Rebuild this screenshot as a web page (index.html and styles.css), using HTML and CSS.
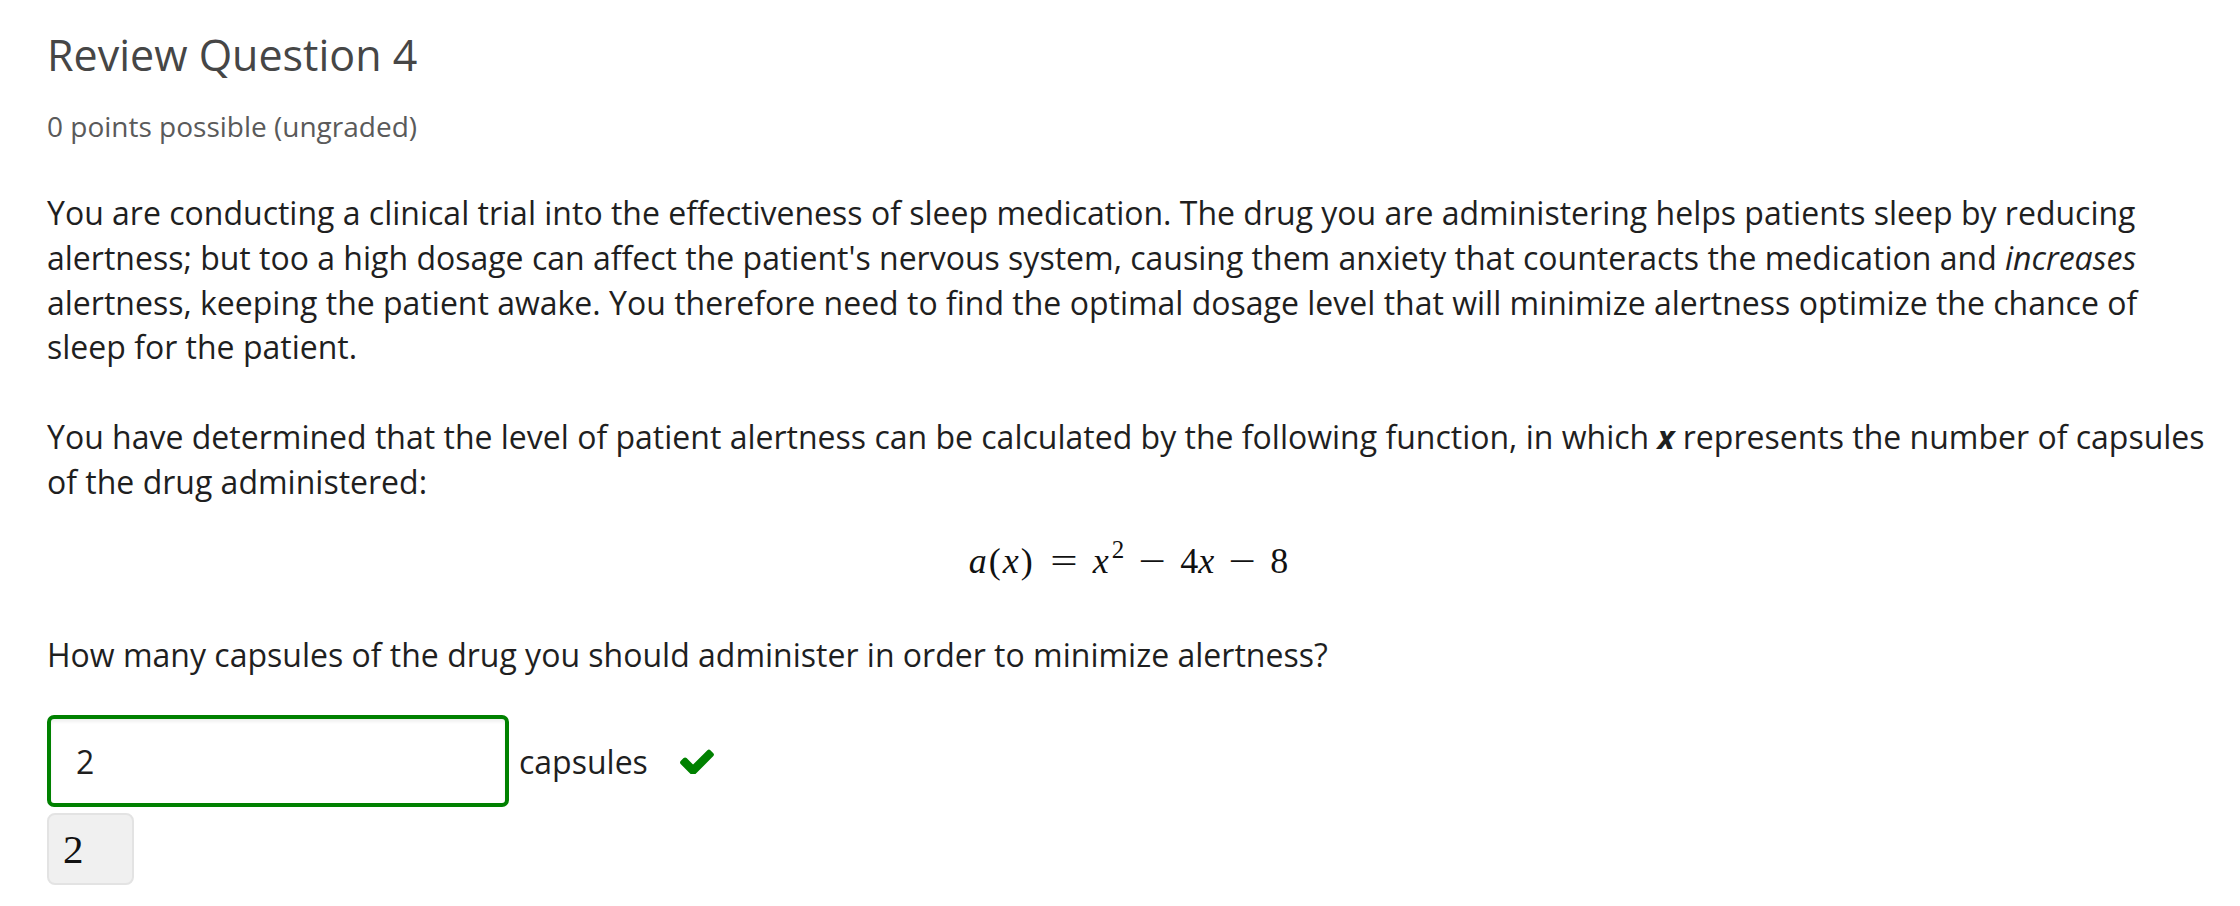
FILE: index.html
```html
<!DOCTYPE html>
<html lang="en">
<head>
<meta charset="utf-8">
<title>Review Question 4</title>
<link rel="stylesheet" href="styles.css">
</head>
<body>
<div class="problem">
  <h3 class="problem-title">Review Question 4</h3>
  <div class="problem-progress">0 points possible (ungraded)</div>
  <p class="text">You are conducting a clinical trial into the effectiveness of sleep medication. The drug you are administering helps patients sleep by reducing alertness; but too a high dosage can affect the patient's nervous system, causing them anxiety that counteracts the medication and <em class="emph">increases</em> alertness, keeping the patient awake. You therefore need to find the optimal dosage level that will minimize alertness optimize the chance of sleep for the patient.</p>
  <p class="text">You have determined that the level of patient alertness can be calculated by the following function, in which <strong class="var">x</strong> represents the number of capsules of the drug administered:</p>
  <div class="equation"><span class="mi">a</span><span class="paren">(</span><span class="mi">x</span><span class="paren">)</span><span class="op rel">=</span><span class="mi">x</span><span class="sup">2</span><span class="op bin">−</span><span class="mn">4</span><span class="mi">x</span><span class="op bin">−</span><span class="mn">8</span></div>
  <p class="question">How many capsules of the drug you should administer in order to minimize alertness?</p>
  <div class="answer-row">
    <div class="answer-input">2</div>
    <span class="unit">capsules</span>
    <svg class="check" viewBox="120 330 1552 1100" aria-hidden="true"><path d="M1671 566q0 40-28 68l-724 724-136 136q-28 28-68 28t-68-28l-136-136-362-362q-28-28-28-68t28-68l136-136q28-28 68-28t68 28l294 295 656-657q28-28 68-28t68 28l136 136q28 28 28 68z"/></svg>
  </div>
  <div class="preview"><span class="preview-num">2</span></div>
</div>
</body>
</html>
```
FILE: styles.css
```css
html, body {
  margin: 0;
  padding: 0;
  background: #ffffff;
}

.problem {
  padding: 29px 30px 0 47px;
  font-family: "Open Sans", "Noto Sans", sans-serif;
  color: #1f1f1f;
}

.problem-title {
  margin: 0;
  font-size: 43px;
  line-height: 52px;
  font-weight: 400;
  color: #464646;
}

.problem-progress {
  margin-top: 27px;
  font-size: 28px;
  line-height: 36px;
  color: #5a5a5a;
}

.text {
  margin: 47px 0 0 0;
  font-size: 32px;
  line-height: 44.8px;
}

.text + .text {
  margin-top: 44.8px;
}

.emph {
  display: inline-block;
  line-height: 1.1;
  font-style: italic;
}

.var {
  display: inline-block;
  line-height: 1.1;
  font-weight: 700;
  font-style: italic;
}

.equation {
  margin-top: 34px;
  height: 44px;
  line-height: 44px;
  text-align: center;
  font-family: "Liberation Serif", "DejaVu Serif", serif;
  font-size: 36px;
  color: #111111;
  white-space: nowrap;
}

.mi {
  font-style: italic;
}

.paren {
  margin: 0 2px;
}

.op {
  display: inline-block;
  width: 26px;
  text-align: center;
  transform: scaleX(1.35);
}

.rel {
  margin: 0 16px;
}

.bin {
  margin: 0 15px;
}

.sup {
  font-size: 25px;
  line-height: 0;
  vertical-align: 15px;
  margin-left: 3px;
}

.question {
  margin: 50px 0 0 0;
  font-size: 32px;
  line-height: 44.8px;
}

.answer-row {
  margin-top: 38px;
  display: flex;
  align-items: center;
}

.answer-input {
  box-sizing: border-box;
  width: 462px;
  height: 92px;
  border: 4px solid #008100;
  border-radius: 7px;
  padding-left: 25px;
  display: flex;
  align-items: center;
  font-size: 32px;
  color: #1f1f1f;
  box-shadow: inset 0 3px 3px rgba(0, 0, 0, 0.06);
}

.unit {
  margin-left: 10px;
  font-size: 32px;
  color: #1f1f1f;
}

.check {
  margin-left: 32px;
  width: 34px;
  height: 25px;
  fill: #008100;
}

.preview {
  box-sizing: border-box;
  margin-top: 6px;
  width: 87px;
  height: 72px;
  background: #f0f0f0;
  border: 2px solid #e3e3e3;
  border-radius: 8px;
  padding-left: 14px;
  display: flex;
  align-items: center;
}

.preview-num {
  font-family: "Liberation Serif", "DejaVu Serif", serif;
  font-size: 41px;
  color: #111111;
}
```
